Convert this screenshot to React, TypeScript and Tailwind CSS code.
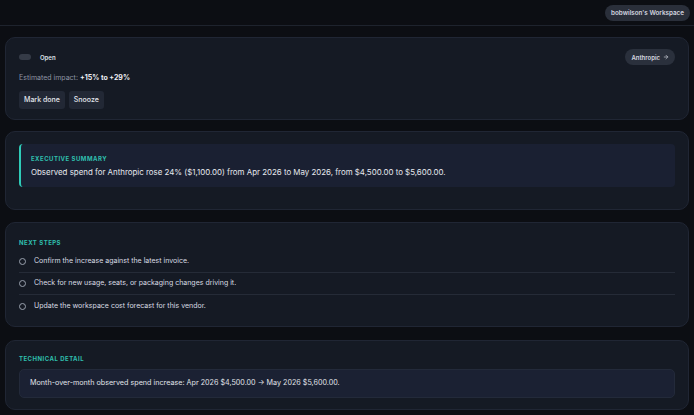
import { ArrowRight } from "lucide-react";

const steps = [
  "Confirm the increase against the latest invoice.",
  "Check for new usage, seats, or packaging changes driving it.",
  "Update the workspace cost forecast for this vendor.",
];

function Label({ children }: { children: React.ReactNode }) {
  return (
    <div className="text-[6px] font-bold tracking-[0.08em] uppercase text-[#2fbfae] leading-[8px]">
      {children}
    </div>
  );
}

export default function App() {
  return (
    <div className="min-h-screen bg-[#0c0e13] text-[#e3e6ec] font-['Inter','Noto_Sans',sans-serif]">
      <header className="h-[26px] border-b border-[#1e232d] flex items-center justify-end pr-[4px]">
        <span className="rounded-full bg-[#2a2f3a] px-[6px] py-[4px] text-[6.3px] font-semibold leading-[8px] text-[#d6d9e0]">
          bobwilson's Workspace
        </span>
      </header>

      <main className="px-[5px] pt-[11px] flex flex-col gap-[11px]">
        <section className="rounded-[10px] border border-[#202634] bg-[#151a24] px-[13px] pt-[11px] pb-[10px]">
          <div className="flex items-center justify-between h-[16px]">
            <div className="flex items-center gap-[9px]">
              <span className="w-[12px] h-[6px] rounded-[3px] bg-[#353b47]" />
              <span className="text-[6px] font-semibold text-[#dfe2e8]">Open</span>
            </div>
            <span className="flex items-center gap-[3px] rounded-full bg-[#2a303c] px-[6px] h-[16px] text-[6px] font-semibold text-[#d6d9e0]">
              Anthropic <ArrowRight size={6} strokeWidth={2.5} />
            </span>
          </div>
          <div className="mt-[7px] text-[7px] leading-[12px] text-[#8d94a3]">
            Estimated impact: <span className="font-bold text-[#eef0f4]">+15% to +29%</span>
          </div>
          <div className="mt-[7px] flex gap-[4px]">
            <button className="h-[18px] px-[5px] rounded-[3px] bg-[#222835] text-[7px] font-medium text-[#e3e6ec]">
              Mark done
            </button>
            <button className="h-[18px] px-[5px] rounded-[3px] bg-[#222835] text-[7px] font-medium text-[#e3e6ec]">
              Snooze
            </button>
          </div>
        </section>

        <section className="rounded-[10px] border border-[#202634] bg-[#151a24] px-[13px] pt-[12px] pb-[22px]">
          <div className="h-[43px] rounded-[4px] border-l-2 border-[#2fcbb8] bg-[#1a2032] pl-[10px] pt-[1px] flex flex-col justify-center gap-[4px]">
            <Label>Executive summary</Label>
            <div className="text-[7.9px] leading-[11px] text-[#e6e8ee]">
              Observed spend for Anthropic rose 24% ($1,100.00) from Apr 2026 to May 2026, from $4,500.00 to $5,600.00.
            </div>
          </div>
        </section>

        <section className="mt-[1px] rounded-[10px] border border-[#202634] bg-[#151a24] px-[13px] pt-[16px] pb-[9px]">
          <Label>Next steps</Label>
          <ul className="mt-[4px]">
            {steps.map((s, i) => (
              <li
                key={s}
                className={`h-[22px] flex items-center gap-[8px] ${i < steps.length - 1 ? "border-b border-[#252b37]" : ""}`}
              >
                <span className="w-[7px] h-[7px] rounded-full border border-[#9aa1ae]" />
                <span className="text-[7px] text-[#d9dce3]">{s}</span>
              </li>
            ))}
          </ul>
        </section>

        <section className="mt-[2px] rounded-[10px] border border-[#202634] bg-[#151a24] px-[13px] pt-[14px] pb-[11px]">
          <Label>Technical detail</Label>
          <div className="mt-[6px] h-[29px] rounded-[5px] border border-[#232a3a] bg-[#1b2133] px-[10px] flex items-center text-[7.2px] text-[#e0e3e9]">
            Month-over-month observed spend increase: Apr 2026 $4,500.00 → May 2026 $5,600.00.
          </div>
        </section>
      </main>
    </div>
  );
}
